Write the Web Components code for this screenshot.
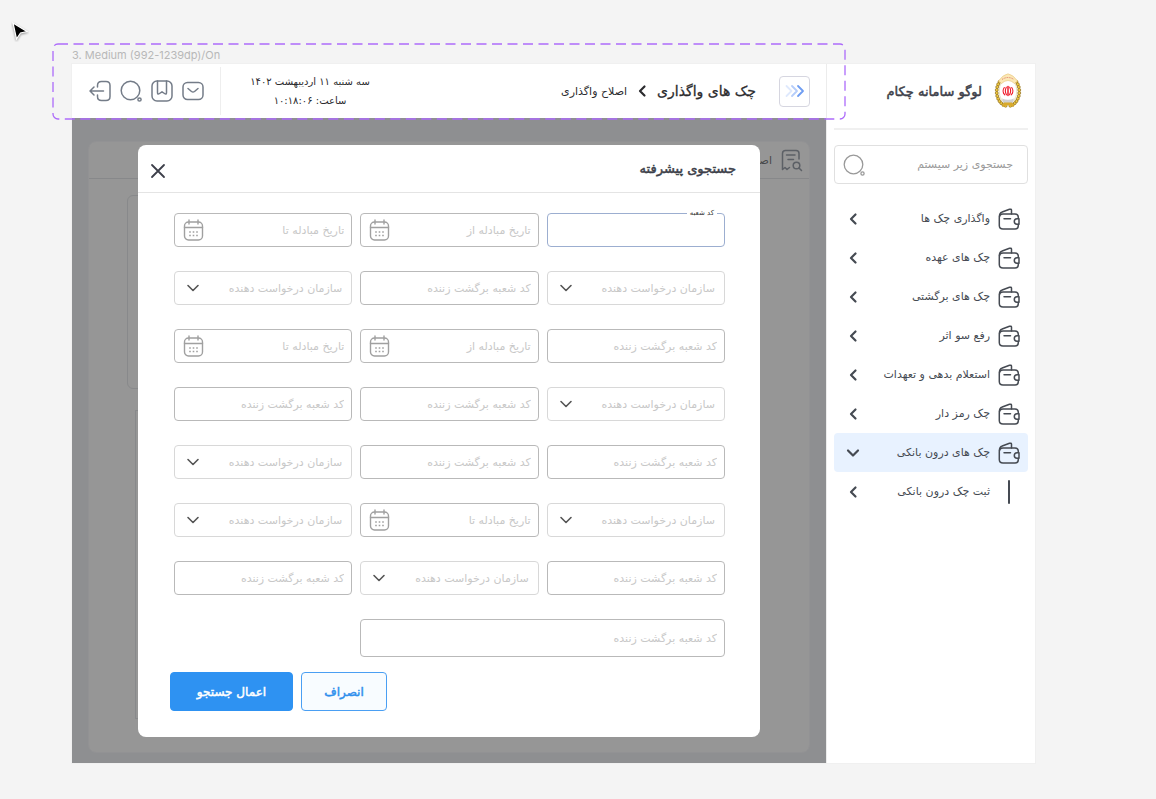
<!DOCTYPE html>
<html lang="fa" dir="rtl">
<head>
<meta charset="utf-8">
<meta name="viewport" content="width=device-width, initial-scale=1">
<title>سامانه چکام</title>
<style>
  html { height: 100%; }
  body {
    margin: 0;
    min-height: 100%;
    background: #f4f4f4;
    color: #3d4148;
    font-family: "DejaVu Sans", sans-serif;
    font-size: 11px;
  }
</style>
</head>
<body>
<ck-app></ck-app>

<script>
/* Base class: clones a template string into an open shadow root. */
class CkElement extends HTMLElement {
  connectedCallback() {
    if (this.shadowRoot) return;
    const tpl = document.createElement('template');
    tpl.innerHTML = '<style>*{box-sizing:border-box}:host{display:block;box-sizing:border-box}</style>' + this.render();
    this.attachShadow({ mode: 'open' }).append(tpl.content.cloneNode(true));
  }
}

const ICONS = {
  logout: `<path d="M8.500 7V5.500Q8.500 1.500 12.500 1.500H17Q21 1.500 21 5.500V16.500Q21 20.500 17 20.500H12.500Q8.500 20.500 8.500 16.500V15"/><path d="M14.500 11H1.500M5 7 1 11 5 15"/>`,
  search: `<circle cx="10.500" cy="10.500" r="9.300"/><circle cx="19.500" cy="19.500" r="1.600"/>`,
  bookmark: `<rect x="1" y="1" width="20" height="20" rx="5"/><path d="M6.500 1V12.500Q6.500 15 8.500 13.500L11 11.800 13.500 13.500Q15.500 15 15.500 12.500V1"/>`,
  mail: `<rect x="1" y="2.500" width="20" height="17" rx="4.500"/><path d="M6 8.500 9.500 11.500Q11 12.600 12.500 11.500L16 8.500"/>`,
  wallet: `<path d="M20.300 10V9Q20 6 17 6H5Q1.300 6 1.300 9.500V17.500Q1.300 21 5 21H17Q20.300 21 20.300 17.500V16.300"/><path d="M21 10.800H19Q16.300 11 16.300 13.500 16.300 16 19 16.200H21Z"/><path d="M1.500 8.500Q1.300 5 4.200 4L11.500 1.300Q13.300.800 13.500 2.200V6"/><path d="M6 10.700H12.500"/>`,
  calendar: `<rect x="1.500" y="3" width="18" height="18" rx="4"/><path d="M1.500 8.500H19.500M6 1V5M15 1V5"/><path stroke-width="1.600" stroke-linecap="butt" d="M6.200 13H7.800M9.700 13H11.300M13.200 13H14.800M6.200 16.500H7.800M9.700 16.500H11.300M13.200 16.500H14.800"/>`,
  report: `<path d="M1.500 20.500V4.500Q1.500 1.500 4.500 1.500H15Q18 1.500 18 4.500V10M5.500 6H14M7 10.500H12.500M1.500 20.500 4 18.500 6 20.500 8.500 18.500"/><circle cx="15.500" cy="16.500" r="3.300"/><path d="M18 19 20.500 21.500"/>`,
  left: `<path d="M13.500 6.500 9 11 13.500 15.500"/>`,
  down: `<path d="M6 8.500 11 13.500 16 8.500"/>`,
  close: `<path d="M5 5 17 17M17 5 5 17"/>`,
  forward: `<path stroke="#dfe9fd" d="M2.500 6 7.500 11 2.500 16"/><path stroke="#b5cdfa" d="M8 6 13 11 8 16"/><path stroke="#6f9df2" d="M14 6 19 11 14 16"/>`
};

customElements.define('ck-icon', class extends CkElement {
  render() {
    return `<style>
      :host{width:22px;height:22px;flex:none}
      svg{display:block;width:100%;height:100%;overflow:visible;fill:none;stroke:currentColor;
          stroke-width:var(--stroke,1.500);stroke-linecap:round;stroke-linejoin:round}
    </style><svg viewBox="0 0 22 22" aria-hidden="true">${ICONS[this.getAttribute('name')]}</svg>`;
  }
});

/* Wheat wreath, ribbon, red mark and stone base of the bank emblem. */
customElements.define('ck-emblem', class extends CkElement {
  render() {
    let leaves = '';
    for (let i = 0; i < 11; i++) {
      const a = (-42 + i * 12) * Math.PI / 180;
      const dx = 11.3 * Math.cos(a), y = 18.5 + 14.5 * Math.sin(a);
      leaves += `<circle cx="${14 + dx}" cy="${y}" r="1.500"/><circle cx="${14 - dx}" cy="${y}" r="1.500"/>`;
    }
    return `<style>:host{width:28px;height:36px;flex:none}svg{display:block}</style>
    <svg width="28" height="36" viewBox="0 0 28 36" aria-hidden="true">
      <g fill="#f0cb3f" stroke="#8f6d1c" stroke-width=".700">${leaves}</g>
      <ellipse cx="14" cy="18" rx="8.800" ry="12.500" fill="#fff" stroke="#d9c98c" stroke-width=".500"/>
      <path d="M4.500 8Q9 1.500 14 .800 19 1.500 23.500 8L20.500 10.500Q14 4.500 7.500 10.500Z" fill="#fbe8b5" stroke="#e3bb68" stroke-width=".500"/>
      <path d="M8 6.500Q14 2.500 20 6.500" fill="none" stroke="#e0796c" stroke-width="1" stroke-dasharray="1 .800"/>
      <path d="M8 25.500Q14 28 20 25.500L18.500 30Q14 32 9.500 30Z" fill="#cfcfcf"/>
      <path d="M10 29.500H18L20 34 14 32 8 34Z" fill="#d8a92c"/>
      <g fill="none" stroke="#ef1c2b" stroke-width="1.100" stroke-linecap="round">
        <path stroke-width="1.500" d="M14 13.500V22.500"/>
        <path d="M12.300 14.200Q10.300 18 12.500 21.800M15.700 14.200Q17.700 18 15.500 21.800M10.300 14.500Q7.500 18.500 10.800 21.800M17.700 14.500Q20.500 18.500 17.200 21.800"/>
      </g>
    </svg>`;
  }
});

customElements.define('ck-nav-item', class extends CkElement {
  render() {
    const open = this.hasAttribute('open'), sub = this.hasAttribute('sub');
    return `<style>
      a{display:flex;align-items:center;gap:8px;height:39px;padding:0 8px;border-radius:4px;
        color:#454a52;text-decoration:none;white-space:nowrap;font-size:11px}
      a.open{background:#e8f2ff}
      .lead{width:22px;display:flex;justify-content:center}
      .bar{width:2px;height:24px;background:#454a52;border-radius:1px}
      .label{flex:1}
      .arrow{--stroke:2.200}
    </style>
    <a href="#" class="${open ? 'open' : ''}">
      <span class="lead">${sub ? '<span class="bar"></span>' : '<ck-icon name="wallet"></ck-icon>'}</span>
      <span class="label"><slot></slot></span>
      <ck-icon class="arrow" name="${open ? 'down' : 'left'}"></ck-icon>
    </a>`;
  }
});

customElements.define('ck-sidebar', class extends CkElement {
  render() {
    return `<style>
      :host{background:#fff;border-left:1px solid #ececec;padding:0 7px}
      .brand{display:flex;align-items:center;gap:12px;height:66px;padding:0 6px 10px;border-bottom:2px solid #f0f0f0}
      h1{margin:0;font-size:13px;font-weight:400;-webkit-text-stroke:.5px;color:#3d3f4a;white-space:nowrap}
      .search{display:flex;align-items:center;height:39px;margin:15px 0;padding:0 14px 0 8px;
        border:1px solid #e0e0e0;border-radius:4px;color:#999}
      input{flex:1;min-width:0;border:0;outline:0;padding:0;background:none;font:inherit;color:inherit}
      input::placeholder{color:#999;opacity:1}
      .search ck-icon{--stroke:1.300}
    </style>
    <div class="brand"><ck-emblem></ck-emblem><h1>لوگو سامانه چکام</h1></div>
    <div class="search">
      <input type="text" placeholder="جستجوی زیر سیستم" aria-label="جستجوی زیر سیستم">
      <ck-icon name="search"></ck-icon>
    </div>
    <nav>
      <ck-nav-item>واگذاری چک ها</ck-nav-item>
      <ck-nav-item>چک های عهده</ck-nav-item>
      <ck-nav-item>چک های برگشتی</ck-nav-item>
      <ck-nav-item>رفع سو اثر</ck-nav-item>
      <ck-nav-item>استعلام بدهی و تعهدات</ck-nav-item>
      <ck-nav-item>چک رمز دار</ck-nav-item>
      <ck-nav-item open>چک های درون بانکی</ck-nav-item>
      <ck-nav-item sub>ثبت چک درون بانکی</ck-nav-item>
    </nav>`;
  }
});

customElements.define('ck-header', class extends CkElement {
  render() {
    return `<style>
      :host{display:flex;align-items:center;height:54px;padding:0 16px;background:#fff;color:#2b2b2e}
      button{display:flex;align-items:center;justify-content:center;padding:0;border:0;background:none;color:#747c88;width:23px;height:31px}
      .expand{width:31px;border:1px solid #d6d6e0;border-radius:4px;--stroke:1.800}
      .crumbs{display:flex;align-items:center;gap:4px;margin-right:23px;white-space:nowrap}
      h2{margin:0;font-size:14px;font-weight:400;-webkit-text-stroke:.3px}
      .crumbs ck-icon{--stroke:2.200}
      .date{margin-right:auto;width:178px;text-align:center;font-size:10px;line-height:19px;white-space:nowrap}
      .date p{margin:0}
      .tools{display:flex;gap:8px;align-items:center;height:48px;border-right:1px solid #eee;padding-right:16px}
    </style>
    <button class="expand" aria-label="باز کردن منو"><ck-icon name="forward"></ck-icon></button>
    <div class="crumbs"><h2>چک های واگذاری</h2><ck-icon name="left"></ck-icon><span>اصلاح واگذاری</span></div>
    <div class="date"><p>سه شنبه ۱۱ اردیبهشت ۱۴۰۲</p><p>ساعت: ۱۰:۱۸:۰۶</p></div>
    <div class="tools">
      <button aria-label="پیام ها"><ck-icon name="mail"></ck-icon></button>
      <button aria-label="نشان ها"><ck-icon name="bookmark"></ck-icon></button>
      <button aria-label="جستجو"><ck-icon name="search"></ck-icon></button>
      <button aria-label="خروج"><ck-icon name="logout"></ck-icon></button>
    </div>`;
  }
});

/* One form control: text by default, kind="date" or kind="select". */
customElements.define('ck-field', class extends CkElement {
  render() {
    const kind = this.getAttribute('kind') || 'text';
    const text = this.getAttribute('text');
    const label = this.getAttribute('label');
    let inner;
    if (kind === 'select') {
      inner = `<select aria-label="${text}"><option>${text}</option></select><ck-icon class="down" name="down"></ck-icon>`;
    } else {
      inner = `<input id="f" type="text" ${label ? '' : `placeholder="${text}" aria-label="${text}"`}>`
        + (kind === 'date' ? '<ck-icon class="cal" name="calendar"></ck-icon>' : '')
        + (label ? `<label for="f">${label}</label>` : '');
    }
    return `<style>
      :host{min-width:0;height:34px}
      .box{position:relative;display:flex;align-items:center;height:100%;padding:0 7px 0 8px;
        border:1px solid #b9b9b9;border-radius:4px;background:#fff}
      .select{border-color:#d8d8d8;padding-right:9px;padding-left:7px}
      .labelled{border-color:#9caed0}
      input,select{flex:1;min-width:0;width:0;height:100%;margin:0;padding:0;border:0;outline:0;background:none;
        appearance:none;font:inherit;color:#c8c8c8}
      input::placeholder{color:#c8c8c8;opacity:1}
      label{position:absolute;top:-7px;right:7px;padding:0 3px;background:#fff;color:#333;font-size:7px;line-height:12px}
      .cal{color:#a0a0a0;--stroke:1.400}
      .down{color:#555;--stroke:1.600}
    </style><div class="box ${kind} ${label ? 'labelled' : ''}">${inner}</div>`;
  }
});

customElements.define('ck-button', class extends CkElement {
  render() {
    return `<style>
      button{height:39px;padding:0 20px;border:1px solid #4a9ff3;border-radius:4px;background:#f8fcff;color:#2f8fed;
        font:inherit;font-size:12px;-webkit-text-stroke:.5px;white-space:nowrap;min-width:86px}
      :host([primary]) button{background:#2e92f2;border-color:#2e92f2;color:#fff;min-width:123px}
    </style><button type="button"><slot></slot></button>`;
  }
});

customElements.define('ck-dialog', class extends CkElement {
  render() {
    const org = '<ck-field kind="select" text="سازمان درخواست دهنده"></ck-field>';
    const code = '<ck-field text="کد شعبه برگشت زننده"></ck-field>';
    const from = '<ck-field kind="date" text="تاریخ مبادله از"></ck-field>';
    const to = '<ck-field kind="date" text="تاریخ مبادله تا"></ck-field>';
    return `<style>
      :host{background:#fff;border-radius:8px}
      header{display:flex;align-items:center;justify-content:space-between;height:48px;padding:0 24px 0 9px;border-bottom:1px solid #e4e4e4}
      h2{margin:0;font-size:13px;font-weight:400;-webkit-text-stroke:.5px;color:#3d3f4a}
      header button{padding:4px 0 0;border:0;background:none;color:#3d3f4a;--stroke:1.800}
      .grid{display:grid;grid-template-columns:repeat(3,minmax(0,1fr));gap:24px 8px;padding:20px 35px 15px 36px}
      .wide{grid-column:span 2;height:38px}
      footer{display:flex;justify-content:flex-end;gap:8px;padding:0 32px 26px}
    </style>
    <header><h2>جستجوی پیشرفته</h2><button aria-label="بستن"><ck-icon name="close"></ck-icon></button></header>
    <div class="grid">
      <ck-field label="کد شعبه" text=""></ck-field>${from}${to}
      ${org}${code}${org}
      ${code}${from}${to}
      ${org}${code}${code}
      ${code}${code}${org}
      ${org}${to}${org}
      ${code}${org}${code}
      <ck-field class="wide" text="کد شعبه برگشت زننده"></ck-field>
    </div>
    <footer><ck-button>انصراف</ck-button><ck-button primary>اعمال جستجو</ck-button></footer>`;
  }
});

/* Dimmed page card with the dialog stacked over it in one grid cell. */
customElements.define('ck-workspace', class extends CkElement {
  render() {
    return `<style>
      :host{display:grid;flex:1;background:#8e8f91;padding:23px 16px 10px}
      .card,ck-dialog{grid-area:1/1}
      .card{display:flex;flex-direction:column;background:#969696;border:1px solid #929294;border-radius:8px;color:#47484a}
      .title{display:flex;align-items:center;gap:9px;height:37px;padding:0 6px;border-bottom:1px solid #87888a}
      .title ck-icon{color:#5c6066}
      .panel,.list{border:1px solid #88898b;border-radius:6px}
      .panel{height:194px;margin:16px 60px 21px 38px}
      .list{flex:1;margin:0 60px 33px 46px;border-radius:0}
      ck-dialog{align-self:start;margin:4px 50px 16px}
    </style>
    <div class="card">
      <div class="title"><ck-icon name="report"></ck-icon><span>اصلاح</span></div>
      <div class="panel"></div><div class="list"></div>
    </div>
    <ck-dialog role="dialog" aria-label="جستجوی پیشرفته"></ck-dialog>`;
  }
});

/* Canvas marks lying over the frame: dashed selection, caption, pointer. */
customElements.define('ck-selection', class extends CkElement {
  render() {
    return `<style>
      :host{position:absolute;top:-21px;left:-20px;right:189px;height:77px;pointer-events:none}
      svg{display:block;width:100%;height:100%}
      rect{x:1px;y:1px;width:calc(100% - 2px);height:calc(100% - 2px);fill:none;stroke:#ad6bfa;stroke-width:1.300;stroke-dasharray:10 5.500}
    </style><svg aria-hidden="true"><rect rx="5"/></svg>`;
  }
});

customElements.define('ck-app', class extends CkElement {
  render() {
    return `<style>
      :host{padding:64px 121px 36px 72px}
      .frame{position:relative;display:grid;grid-template-columns:209px minmax(0,1fr);outline:1px solid #f0f0f0}
      main{display:flex;flex-direction:column;min-width:0}
      .caption{position:absolute;top:-16px;left:0;font:11px/14px Inter,sans-serif;color:#b8b8b8;direction:ltr}
      .pointer{position:absolute;top:20px;left:11px}
    </style>
    <div class="frame">
      <ck-sidebar></ck-sidebar>
      <main><ck-header></ck-header><ck-workspace></ck-workspace></main>
      <span class="caption">3. Medium (992-1239dp)/On</span>
      <ck-selection></ck-selection>
    </div>
    <svg class="pointer" width="18" height="22" viewBox="0 0 18 22" aria-hidden="true">
      <path d="M2 3 16 11.500 9.500 13 5.500 19Z" fill="#000" stroke="#fff" stroke-width="1.200" style="filter:drop-shadow(0 1px 1px #0006)"/>
    </svg>`;
  }
});
</script>
</body>
</html>
